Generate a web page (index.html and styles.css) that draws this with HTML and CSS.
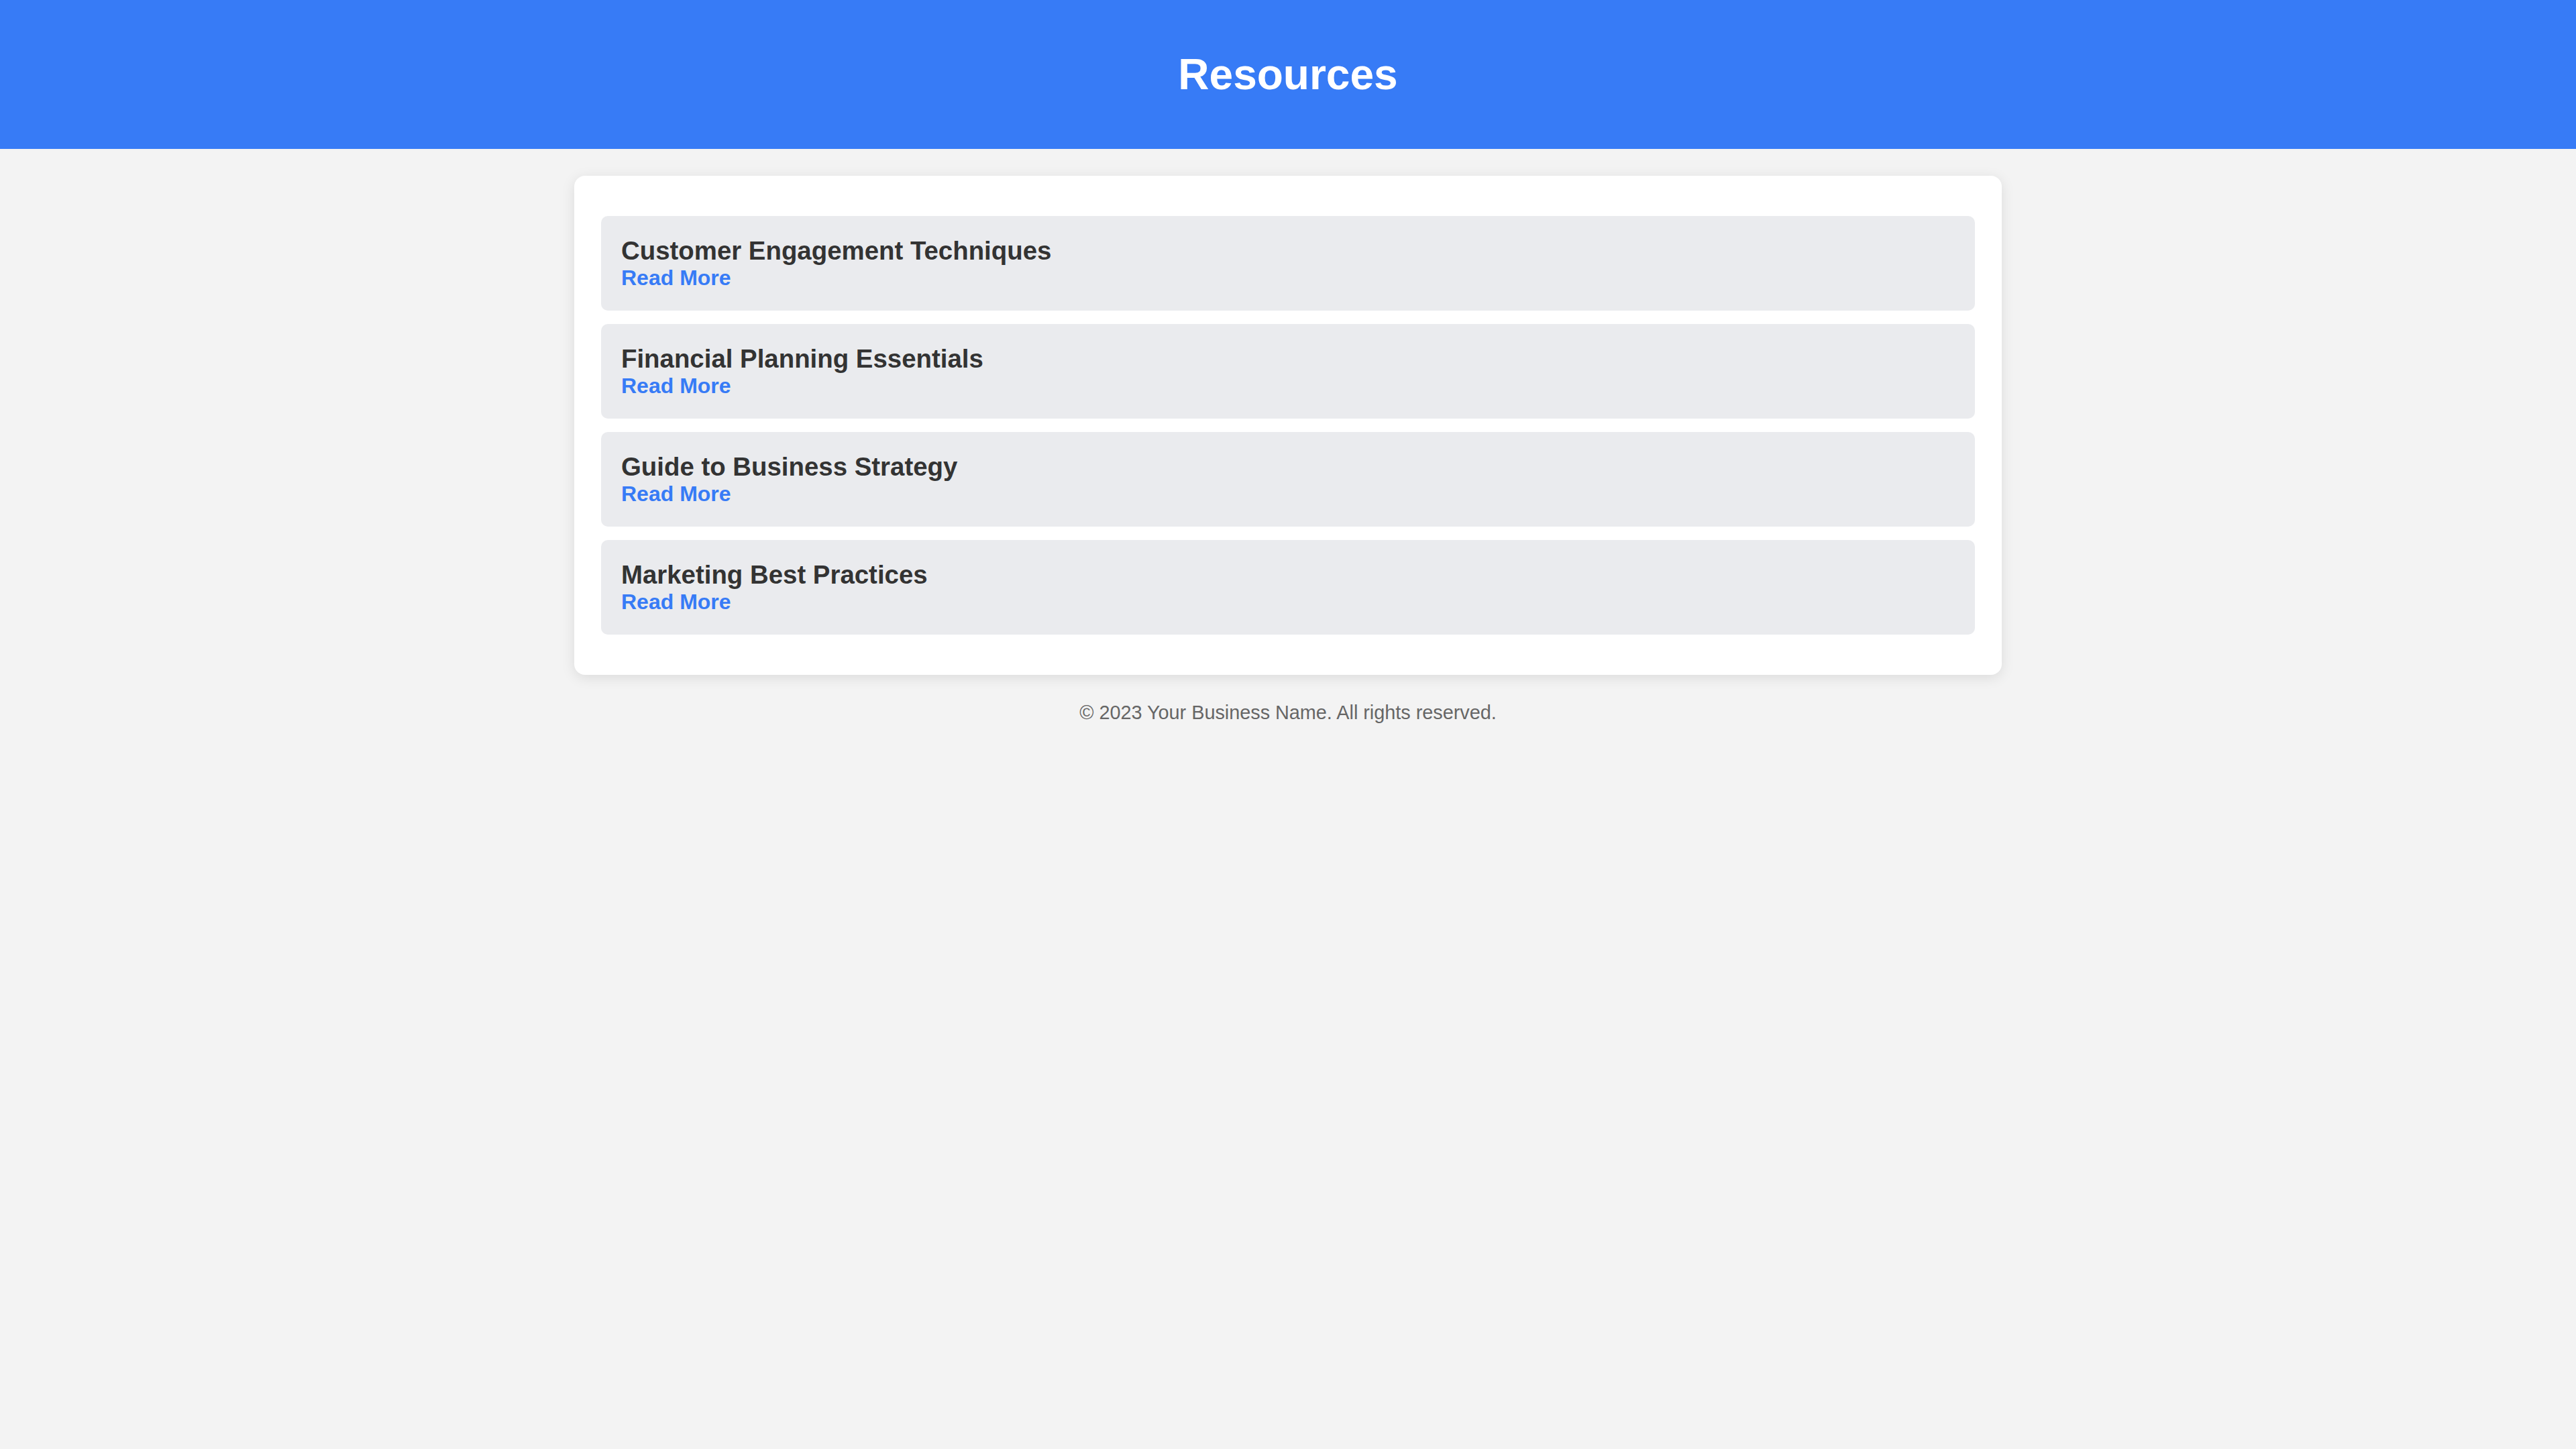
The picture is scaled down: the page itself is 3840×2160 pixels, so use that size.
FILE: index.html
```html
<!DOCTYPE html>
<html lang="en">
<head>
<meta charset="utf-8">
<title>Resources</title>
<link rel="stylesheet" href="styles.css">
</head>
<body>
<header class="site-header">
  <h1 class="site-title">Resources</h1>
</header>
<main class="card">
  <ul class="resource-list">
    <li class="resource-item">
      <h3 class="resource-title">Customer Engagement Techniques</h3>
      <a class="read-more" href="#">Read More</a>
    </li>
    <li class="resource-item">
      <h3 class="resource-title">Financial Planning Essentials</h3>
      <a class="read-more" href="#">Read More</a>
    </li>
    <li class="resource-item">
      <h3 class="resource-title">Guide to Business Strategy</h3>
      <a class="read-more" href="#">Read More</a>
    </li>
    <li class="resource-item">
      <h3 class="resource-title">Marketing Best Practices</h3>
      <a class="read-more" href="#">Read More</a>
    </li>
  </ul>
</main>
<footer class="site-footer">© 2023 Your Business Name. All rights reserved.</footer>
</body>
</html>
```
FILE: styles.css
```css
html, body {
  margin: 0;
  padding: 0;
}
body {
  background: #f3f3f3;
  font-family: "Liberation Sans", Arial, Helvetica, sans-serif;
  font-size: 32px;
  color: #333;
}
.site-header {
  background: #377bf6;
  color: #fff;
  text-align: center;
  padding: 31px 0;
}
.site-title {
  margin: 43px 0;
  font-size: 64px;
  font-weight: bold;
  line-height: normal;
}
.card {
  display: block;
  width: 2048px;
  margin: 40px auto 0;
  padding: 40px;
  background: #fff;
  border-radius: 16px;
  box-shadow: 0 4px 20px rgba(0, 0, 0, 0.1);
}
.resource-list {
  list-style: none;
  margin: 0;
  padding: 0;
}
.resource-item {
  margin: 20px 0;
  padding: 30px 30px;
  background: #eaebee;
  border-radius: 10px;
}
.resource-title {
  margin: 0;
  font-size: 38.4px;
  font-weight: bold;
  color: #333;
  line-height: normal;
}
.read-more {
  display: block;
  font-size: 32px;
  font-weight: bold;
  color: #377bf6;
  text-decoration: none;
  line-height: normal;
}
.site-footer {
  text-align: center;
  padding: 40px 0;
  font-size: 28.8px;
  color: #666;
}
```
